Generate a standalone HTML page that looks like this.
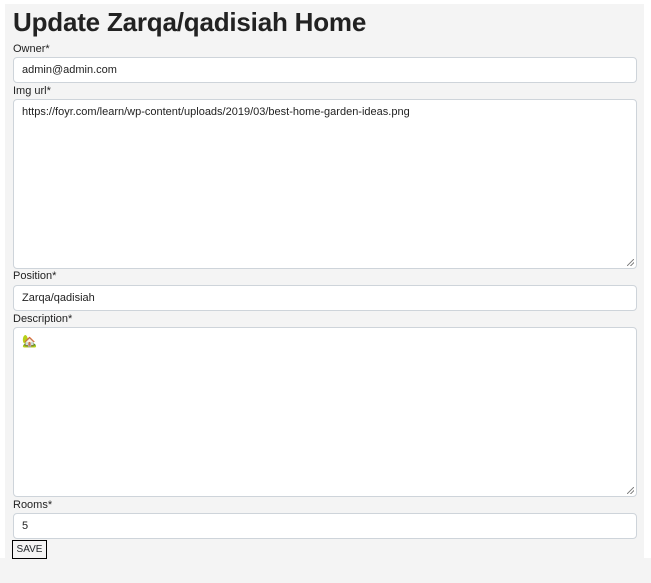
<!DOCTYPE html>
<html><head><style>
html,body{margin:0;padding:0;background:#f4f4f4;width:651px;height:583px;overflow:hidden;font-family:"Liberation Sans",sans-serif;color:#212529}
.top{position:absolute;left:0;top:0;width:651px;height:4px;background:#fff}
.lft{position:absolute;left:0;top:0;width:5px;height:558px;background:#fff}
.rgt{position:absolute;left:644px;top:0;width:7px;height:558px;background:#fff}
.c{position:absolute;left:5px;top:4px;width:639px;height:554px;background:#f4f4f4}
h1{position:absolute;left:13px;top:5px;margin:0;font-size:26px;font-weight:600;line-height:34px;color:#222;letter-spacing:-0.2px}
.l{position:absolute;left:13px;font-size:11px;line-height:13px;color:#222}
.i{position:absolute;left:13px;width:624px;background:#fff;border:1px solid #ced4da;border-radius:4px;font-size:11px;color:#222;box-sizing:border-box;padding-left:8px}
.btn{position:absolute;left:12px;top:540px;width:35px;height:19px;border:1px solid #000;box-sizing:border-box;font-size:10px;line-height:17px;text-align:center;background:#f4f4f4}
.rz{position:absolute;right:2px;bottom:2px;width:7px;height:7px;background:linear-gradient(135deg,transparent 45%,#888 45%,#888 55%,transparent 55%,transparent 70%,#888 70%,#888 80%,transparent 80%)}
</style></head><body>
<div class="top"></div><div class="lft"></div><div class="rgt"></div><div class="c"></div>
<h1>Update Zarqa/qadisiah Home</h1>
<div class="l" style="top:43px">Owner*</div>
<div class="i" style="top:57px;height:26px;line-height:24px">admin@admin.com</div>
<div class="l" style="top:85px">Img url*</div>
<div class="i" style="top:99px;height:170px;padding-top:6px;line-height:13px">https://foyr.com/learn/wp-content/uploads/2019/03/best-home-garden-ideas.png<div class="rz"></div></div>
<div class="l" style="top:270px">Position*</div>
<div class="i" style="top:285px;height:26px;line-height:24px">Zarqa/qadisiah</div>
<div class="l" style="top:313px">Description*</div>
<div class="i" style="top:327px;height:170px;padding-top:6px;line-height:14px"><span style="font-size:12px">🏡</span><div class="rz"></div></div>
<div class="l" style="top:499px">Rooms*</div>
<div class="i" style="top:513px;height:26px;line-height:24px">5</div>
<div class="btn">SAVE</div>
</body></html>
